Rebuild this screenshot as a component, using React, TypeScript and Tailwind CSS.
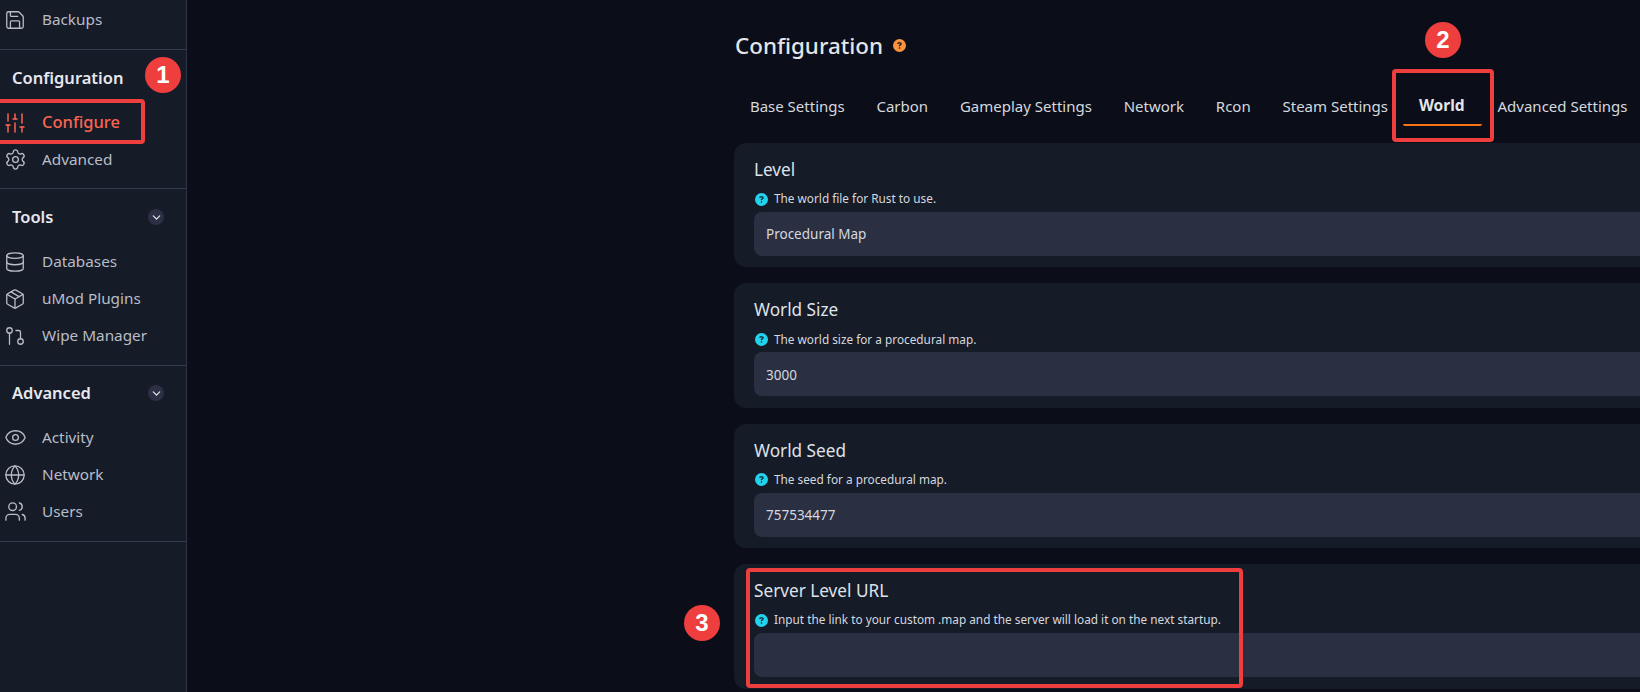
import { Save, SlidersVertical, Settings, Database, Package, GitPullRequest, Eye, Globe, Users, ChevronDown } from "lucide-react";
import { FaCircleQuestion } from "react-icons/fa6";
import type { ReactNode } from "react";

function NavRow({ icon, label, active }: { icon: ReactNode; label: string; active?: boolean }) {
  return (
    <div className={active ? "flex h-[37px] items-center text-[16.5px] font-medium text-[#fb6550]" : "flex h-[37px] items-center text-[15.3px] text-[#b9bdc7]"}>
      <div className="flex w-[42px] shrink-0 justify-center pr-[12px]">{icon}</div>
      <span>{label}</span>
    </div>
  );
}

function NavHeading({ label, chevron }: { label: string; chevron?: boolean }) {
  return (
    <div className="flex h-[54px] items-center justify-between pl-[12px] pr-[22px] pt-[2px]">
      <span className="text-[16.5px] font-semibold text-[#e6e8ee]">{label}</span>
      {chevron && (
        <span className="flex h-4 w-4 items-center justify-center rounded-full bg-[#2c3044]">
          <ChevronDown size={13} strokeWidth={2.2} className="text-[#e6e8ee]" />
        </span>
      )}
    </div>
  );
}

function Field({ label, help, value }: { label: string; help: string; value?: string }) {
  return (
    <div className="h-[124.4px] rounded-xl bg-[#161b28] px-5 pt-[15px]">
      <div className="h-[24px] text-[17.2px] leading-[24px] text-[#dfe2e9]">{label}</div>
      <div className="mt-[8px] flex h-[18px] items-center gap-[6px] pl-px text-[11.8px] text-[#d5d8df]">
        <FaCircleQuestion size={13} className="text-[#22d3ee]" />
        <span>{help}</span>
      </div>
      <div className="mt-[4px] flex h-[44px] items-center rounded-lg bg-[#2a2f42] px-3 pt-px text-[13.5px] text-[#d5d8df]">{value}</div>
    </div>
  );
}

const tabs = ["Base Settings", "Carbon", "Gameplay Settings", "Network", "Rcon", "Steam Settings", "World", "Advanced Settings"];

export default function App() {
  return (
    <div className="relative flex h-[692px] w-[1640px] overflow-hidden bg-[#0b0e18] font-['Noto_Sans',sans-serif]">
      <aside className="h-full w-[187px] shrink-0 border-r border-[#2e3348] bg-[#161b28]">
        <div className="border-b border-[#363b50] pb-[11px] pt-px">
          <NavRow icon={<Save size={22} strokeWidth={1.4} />} label="Backups" />
        </div>
        <div className="border-b border-[#363b50] pb-[10px]">
          <NavHeading label="Configuration" />
          <NavRow active icon={<SlidersVertical size={24} strokeWidth={1.5} />} label="Configure" />
          <NavRow icon={<Settings size={23} strokeWidth={1.4} />} label="Advanced" />
        </div>
        <div className="border-b border-[#363b50] pb-[11px]">
          <NavHeading label="Tools" chevron />
          <NavRow icon={<Database size={22} strokeWidth={1.4} />} label="Databases" />
          <NavRow icon={<Package size={22} strokeWidth={1.4} />} label="uMod Plugins" />
          <NavRow icon={<GitPullRequest size={22} strokeWidth={1.4} />} label="Wipe Manager" />
        </div>
        <div className="-mt-px border-b border-[#363b50] pb-[11px]">
          <NavHeading label="Advanced" chevron />
          <NavRow icon={<Eye size={23} strokeWidth={1.4} />} label="Activity" />
          <NavRow icon={<Globe size={22} strokeWidth={1.4} />} label="Network" />
          <NavRow icon={<Users size={23} strokeWidth={1.4} />} label="Users" />
        </div>
      </aside>

      <main className="w-[1000px] shrink-0 pl-[547px]">
        <div className="w-[1000px]">
          <div className="flex h-[91px] items-center gap-[10px] pl-px">
            <h1 className="text-[22.4px] font-medium text-[#e3e5ea]">Configuration</h1>
            <FaCircleQuestion size={13} className="text-[#fb923c]" />
          </div>
          <div className="flex h-[52px]">
            {tabs.map((tab) =>
              tab === "World" ? (
                <div key={tab} className="relative -ml-px flex h-[30px] items-center pl-4 pr-[17px] text-[15.5px] font-bold text-[#e3e5ea]">
                  {tab}
                  <div className="absolute left-0 right-0 top-[33px] h-[2px] rounded-b-[4px] bg-[#f97316]" />
                </div>
              ) : (
                <div key={tab} className="flex h-[30px] items-center px-[15.9px] text-[15px] text-[#d5d8df]">{tab}</div>
              )
            )}
          </div>
          <div className="flex flex-col gap-4">
            <Field label="Level" help="The world file for Rust to use." value="Procedural Map" />
            <Field label="World Size" help="The world size for a procedural map." value="3000" />
            <Field label="World Seed" help="The seed for a procedural map." value="757534477" />
            <Field label="Server Level URL" help="Input the link to your custom .map and the server will load it on the next startup." />
          </div>
        </div>
      </main>

      {/* annotations drawn over the screenshot */}
      <div className="absolute left-[-6px] top-[99px] h-[45px] w-[151px] rounded-[4px] border-4 border-[#ef3e3e]" />
      <div className="absolute left-[1392px] top-[69px] h-[73px] w-[102px] rounded-[4px] border-4 border-[#ef3e3e]" />
      <div className="absolute left-[746px] top-[568px] h-[120px] w-[497px] rounded-[4px] border-4 border-[#ef3e3e]" />
      <div className="absolute left-[145px] top-[57px] flex h-9 w-9 items-center justify-center rounded-full bg-[#ef3e3e] font-['Liberation_Sans',sans-serif] text-[24px] font-bold text-white">1</div>
      <div className="absolute left-[1425px] top-[22px] flex h-9 w-9 items-center justify-center rounded-full bg-[#ef3e3e] font-['Liberation_Sans',sans-serif] text-[24px] font-bold text-white">2</div>
      <div className="absolute left-[684px] top-[605px] flex h-9 w-9 items-center justify-center rounded-full bg-[#ef3e3e] font-['Liberation_Sans',sans-serif] text-[24px] font-bold text-white">3</div>
    </div>
  );
}
